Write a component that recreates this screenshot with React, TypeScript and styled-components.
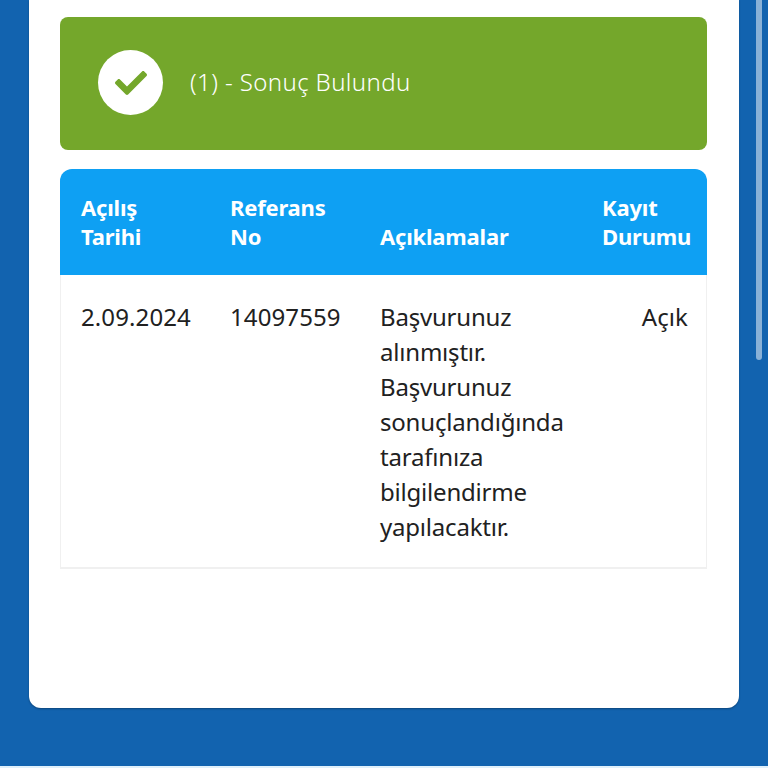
import styled, { createGlobalStyle } from 'styled-components';
import { FaCheck } from 'react-icons/fa';

const GlobalStyle = createGlobalStyle`
  html, body {
    margin: 0;
    padding: 0;
    height: 768px;
    overflow: hidden;
    background: #1263af;
    font-family: 'Noto Sans', 'Open Sans', sans-serif;
  }
`;

const Page = styled.div`
  position: relative;
  height: 766px;
  border-bottom: 2px solid #dff0fb;
  background: #1263af;
  padding: 0 29px;
`;

const Card = styled.main`
  width: 710px;
  height: 708px;
  box-sizing: border-box;
  padding: 17px 32px 0 31px;
  background: #fff;
  border-radius: 0 0 12px 12px;
  box-shadow: 0 1px 2px rgba(0, 0, 0, 0.3);
  display: flex;
  flex-direction: column;
  gap: 19px;
`;

const Alert = styled.section`
  height: 133px;
  display: flex;
  align-items: center;
  gap: 27px;
  padding: 0 0 2px 38px;
  box-sizing: border-box;
  background: #74a72b;
  border-radius: 8px;
  color: #fff;
  font-size: 24px;
  font-weight: 300;
`;

const IconCircle = styled.div`
  width: 65px;
  height: 65px;
  border-radius: 50%;
  background: #fff;
  color: #74a72b;
  display: flex;
  align-items: center;
  justify-content: center;
`;

const AlertText = styled.span`
  margin-bottom: 2px;
  letter-spacing: 0.4px;
`;

const Table = styled.table`
  width: 647px;
  table-layout: fixed;
  border-collapse: separate;
  border-spacing: 0;
  color: #212121;
  font-size: 24px;
`;

const HeadCell = styled.th`
  height: 106px;
  box-sizing: border-box;
  padding: 0 18px 24px 20px;
  vertical-align: bottom;
  text-align: left;
  background: #0ea0f3;
  color: #fff;
  font-size: 22px;
  line-height: 29px;
  font-weight: 700;
  letter-spacing: -0.2px;

  &:first-child {
    padding-left: 21px;
    padding-right: 30px;
    border-top-left-radius: 12px;
  }
  &:last-child {
    padding-right: 0;
    border-top-right-radius: 12px;
  }
`;

const Cell = styled.td<{ $right?: boolean; $tight?: boolean }>`
  padding: 24px 18px 23px 20px;
  vertical-align: top;
  line-height: 35px;
  text-align: ${(p) => (p.$right ? 'right' : 'left')};
  letter-spacing: ${(p) => (p.$tight ? '-0.2px' : '0.1px')};
  border-bottom: 2px solid #f0f0f0;

  &:first-child {
    border-left: 1px solid #f0f0f0;
  }
  &:last-child {
    border-right: 1px solid #f0f0f0;
  }
`;

const Scrollbar = styled.div`
  position: absolute;
  top: 0;
  right: 6px;
  width: 6px;
  height: 360px;
  border-radius: 0 0 3px 3px;
  background: rgba(255, 255, 255, 0.5);
`;

export default function App() {
  return (
    <>
      <GlobalStyle />
      <Page>
        <Card>
          <Alert>
            <IconCircle>
              <FaCheck size={32} />
            </IconCircle>
            <AlertText>(1) - Sonuç Bulundu</AlertText>
          </Alert>
          <Table>
            <colgroup>
              <col style={{ width: 150 }} />
              <col style={{ width: 150 }} />
              <col style={{ width: 222 }} />
              <col style={{ width: 125 }} />
            </colgroup>
            <thead>
              <tr>
                <HeadCell>Açılış Tarihi</HeadCell>
                <HeadCell>Referans No</HeadCell>
                <HeadCell>Açıklamalar</HeadCell>
                <HeadCell>Kayıt Durumu</HeadCell>
              </tr>
            </thead>
            <tbody>
              <tr>
                <Cell>2.09.2024</Cell>
                <Cell>14097559</Cell>
                <Cell $tight>Başvurunuz alınmıştır. Başvurunuz sonuçlandığında tarafınıza bilgilendirme yapılacaktır.</Cell>
                <Cell $right>Açık</Cell>
              </tr>
            </tbody>
          </Table>
        </Card>
        <Scrollbar />
      </Page>
    </>
  );
}
